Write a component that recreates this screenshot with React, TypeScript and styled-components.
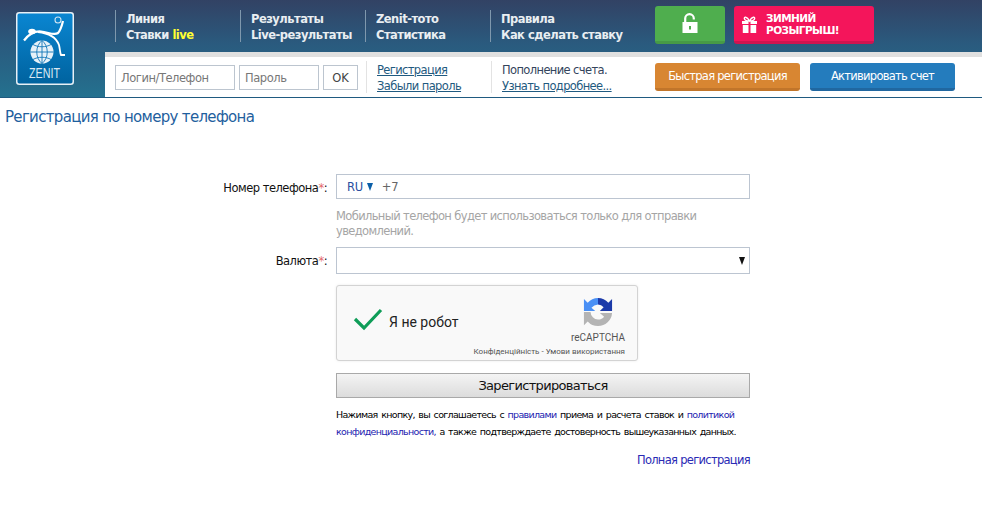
import React from "react";
import styled, { createGlobalStyle } from "styled-components";

const Global = createGlobalStyle`
  html, body { margin: 0; padding: 0; background: #fff; }
  body { font-family: "DejaVu Sans", Tahoma, sans-serif; font-size: 11.5px; color: #000; }
  a { color: inherit; }
`;

const Page = styled.div`
  width: 982px;
  height: 507px;
  overflow: hidden;
`;

const Header = styled.header`
  display: flex;
  height: 97px;
  border-bottom: 1px solid #1f5a80;
  background: linear-gradient(180deg, #324264 0%, #2a5a7e 45%, #24718f 100%);
`;

const LogoCol = styled.div`
  width: 105px;
  flex: none;
  padding: 12px 0 0 16px;
  box-sizing: border-box;
`;

const Main = styled.div`
  flex: 1;
  display: flex;
  flex-direction: column;
`;

const TopRow = styled.div`
  height: 52px;
  display: flex;
  align-items: flex-start;
  padding: 6px 0 0 10px;
  box-sizing: border-box;
`;

const NavCol = styled.div<{ $w: number }>`
  width: ${(p) => p.$w}px;
  flex: none;
  height: 32px;
  margin-top: 4px;
  padding: 1px 0 0 10px;
  border-left: 1px solid #7f98ad;
  box-sizing: border-box;
  color: #e9eef2;
  font-weight: 700;
  font-size: 11.5px;
  letter-spacing: -0.52px;
  line-height: 16px;
  white-space: nowrap;
`;

const Live = styled.span`
  color: #ffff33;
`;

const TopBtn = styled.div<{ $w: number; $bg: string; $edge: string; $ml: number }>`
  width: ${(p) => p.$w}px;
  height: 38px;
  margin-left: ${(p) => p.$ml}px;
  flex: none;
  box-sizing: border-box;
  background: ${(p) => p.$bg};
  border-bottom: 3px solid ${(p) => p.$edge};
  border-radius: 3px;
  display: flex;
  align-items: center;
`;

const LockBtn = styled(TopBtn)`
  justify-content: center;
`;

const PromoBtn = styled(TopBtn)`
  padding: 1px 0 0 7px;
  gap: 8px;
  color: #fff;
  font-weight: 700;
  font-size: 10.5px;
  line-height: 12px;
  letter-spacing: -0.55px;
`;

const LoginRow = styled.div`
  height: 45px;
  background: #fff;
  border-top: 5px solid #e0e0e0;
  box-sizing: border-box;
  display: flex;
  align-items: center;
  padding-left: 10px;
`;

const LoginInput = styled.div<{ $w: number }>`
  width: ${(p) => p.$w}px;
  height: 25px;
  margin-right: 4px;
  flex: none;
  box-sizing: border-box;
  border: 1px solid #bcc5cf;
  color: #777;
  padding-left: 5px;
  line-height: 25px;
  font-size: 11.5px;
  letter-spacing: -0.45px;
  white-space: nowrap;
`;

const OkBox = styled(LoginInput)`
  color: #444;
  padding: 0;
  text-align: center;
  margin-right: 8px;
  letter-spacing: 0;
`;

const LinkCol = styled.div<{ $w: number }>`
  width: ${(p) => p.$w}px;
  flex: none;
  height: 32px;
  padding: 1px 0 0 10px;
  border-left: 1px solid #e3e3e3;
  box-sizing: border-box;
  font-size: 11.5px;
  letter-spacing: -0.62px;
  line-height: 16px;
  color: #33445c;
  white-space: nowrap;
`;

const UnderLink = styled.a`
  display: block;
  color: #1f5a80;
  text-decoration: underline;
`;

const ActionBtn = styled.div<{ $bg: string; $edge: string; $ml: number }>`
  width: 145px;
  height: 28px;
  margin-left: ${(p) => p.$ml}px;
  flex: none;
  box-sizing: border-box;
  background: ${(p) => p.$bg};
  border-bottom: 3px solid ${(p) => p.$edge};
  border-radius: 3px;
  color: #fff;
  font-size: 11.5px;
  letter-spacing: -0.72px;
  line-height: 27px;
  text-align: center;
  white-space: nowrap;
`;

const Title = styled.h1`
  margin: 0;
  padding: 10px 0 0 5px;
  height: 76px;
  box-sizing: border-box;
  font-size: 15px;
  font-weight: 400;
  letter-spacing: -0.68px;
  line-height: 18px;
  color: #1f5f9e;
`;

const Form = styled.div`
  display: grid;
  grid-template-columns: 327px 414px;
  column-gap: 9px;
  align-items: start;
`;

const Label = styled.label`
  height: 25px;
  text-align: right;
  font-size: 11.5px;
  letter-spacing: -0.5px;
  line-height: 28px;
  white-space: nowrap;
  color: #111;
`;

const Star = styled.span`
  color: #e56a6a;
`;

const Field = styled.div<{ $h: number }>`
  height: ${(p) => p.$h}px;
  box-sizing: border-box;
  border: 1px solid #bcc5d1;
  display: flex;
  align-items: center;
  padding: 1px 0 0 10px;
  font-size: 11.5px;
  letter-spacing: -0.3px;
  color: #666;
`;

const Country = styled.span`
  color: #2a4fa0;
  margin-right: 9px;
  display: flex;
  align-items: center;
  gap: 4px;
`;

const Triangle = styled.i<{ $color: string }>`
  display: block;
  width: 0;
  height: 0;
  border-left: 3.5px solid transparent;
  border-right: 3.5px solid transparent;
  border-top: 8px solid ${(p) => p.$color};
`;

const Hint = styled.div`
  grid-column: 2;
  padding-top: 10px;
  height: 48px;
  box-sizing: border-box;
  font-size: 11.5px;
  letter-spacing: -0.63px;
  line-height: 15px;
  color: #a5a5a5;
`;

const SelectField = styled(Field)`
  justify-content: flex-end;
  padding-right: 4px;
`;

const Cell = styled.div`
  grid-column: 2;
`;

const Captcha = styled.div`
  position: relative;
  margin-top: 11px;
  width: 302px;
  height: 76px;
  box-sizing: border-box;
  border: 1px solid #d3d3d3;
  border-radius: 3px;
  background: #f9f9f9;
  box-shadow: 0 0 3px rgba(0, 0, 0, 0.08);
  display: flex;
  align-items: center;
  padding: 0 0 2px 16px;
  gap: 6px;
`;

const RobotText = styled.span`
  font-family: Roboto, sans-serif;
  font-size: 14px;
  color: #222;
`;

const CheckWrap = styled.div`
  margin-bottom: 7px;
  height: 24px;
`;

const CaptchaMark = styled.div`
  position: absolute;
  right: 12px;
  top: 11px;
  display: flex;
  flex-direction: column;
  align-items: flex-end;
`;

const CaptchaIcon = styled.div`
  margin-right: 12px;
  height: 30px;
`;

const CaptchaName = styled.div`
  margin-top: 5px;
  font-family: Roboto, sans-serif;
  font-size: 10px;
  line-height: 12px;
  color: #555;
`;

const CaptchaLegal = styled.div`
  position: absolute;
  right: 12px;
  bottom: 3px;
  font-family: Roboto, sans-serif;
  font-size: 8px;
  line-height: 10px;
  color: #555;
  white-space: nowrap;
`;

const Submit = styled.div`
  margin-top: 12px;
  height: 25px;
  box-sizing: border-box;
  border: 1px solid #a9a9a9;
  background: linear-gradient(180deg, #f4f4f4, #dcdcdc);
  text-align: center;
  font-size: 13px;
  letter-spacing: -0.67px;
  line-height: 24px;
  color: #111;
`;

const Terms = styled.div`
  margin-top: 8px;
  font-size: 9.5px;
  letter-spacing: -0.68px;
  word-spacing: 1.2px;
  line-height: 17px;
  color: #000;
  white-space: nowrap;
`;

const TermLink = styled.a`
  color: #2222b0;
  text-decoration: none;
`;

const FullLink = styled.a`
  display: block;
  margin-top: 12px;
  text-align: right;
  font-size: 11.5px;
  letter-spacing: -0.7px;
  line-height: 16px;
  color: #2a2ab4;
`;

const LogoSvg = styled.svg`
  display: block;
`;

const LogoWord = styled.text`
  font-family: "Liberation Sans", sans-serif;
  font-size: 14px;
  fill: #dbe9f3;
`;

const Logo = () => (
  <LogoSvg width="58" height="73" viewBox="0 0 58 73">
    <defs>
      <linearGradient id="lg" x1="0" y1="0" x2="0" y2="1">
        <stop offset="0" stopColor="#0a86d2" />
        <stop offset="1" stopColor="#00639f" />
      </linearGradient>
    </defs>
    <rect x="0.75" y="0.75" width="56.5" height="71.5" rx="2.5" fill="url(#lg)" stroke="#e8f0f6" strokeWidth="1.5" />
    <ellipse cx="16" cy="19.5" rx="3.8" ry="2.8" fill="#fff" />
    <path d="M8 28.5 C13 22 19 19 25 19.5 C32 20 38 24 42 21 C45 18 46 13 47 9" fill="none" stroke="#fff" strokeWidth="2.2" />
    <path d="M22 20 C32 21 40 25 43 33 C44 37 44 41 45 43 L49 43" fill="none" stroke="#fff" strokeWidth="1.8" />
    <circle cx="42" cy="8" r="3" fill="none" stroke="#cfe4f2" strokeWidth="1.1" />
    <circle cx="26" cy="40" r="11.5" fill="#e6f1f8" />
    <path d="M26 28.5 V51.5 M14.5 40 H37.5 M17 32.5 C22 35.5 30 35.5 35 32.5 M17 47.5 C22 44.5 30 44.5 35 47.5 M26 28.5 C19 34 19 46 26 51.5 M26 28.5 C33 34 33 46 26 51.5" fill="none" stroke="#1176b8" strokeWidth="0.9" />
    <LogoWord x="13" y="66" textLength="31" lengthAdjust="spacingAndGlyphs">ZENIT</LogoWord>
  </LogoSvg>
);

const LockIcon = () => (
  <svg width="16" height="21" viewBox="0 0 16 21">
    <path d="M3.2 9 V5.5 a4.3 4.3 0 0 1 8.6 0 V6.5" fill="none" stroke="#fff" strokeWidth="2.2" />
    <path fillRule="evenodd" d="M0.5 9 H15.5 V20 H0.5 Z M7 13 V16.5 H9 V13 Z" fill="#fff" />
  </svg>
);

const GiftIcon = () => (
  <svg width="17" height="17" viewBox="0 0 17 17">
    <path d="M1 5 H7.5 V8 H1 Z M9.5 5 H16 V8 H9.5 Z M1.8 9 H7.5 V17 H1.8 Z M9.5 9 H15.2 V17 H9.5 Z" fill="#fff" />
    <path d="M8.5 5 C6 0 2.5 0.5 3.5 3 C4 4.5 7 5 8.5 5 C10 5 13 4.5 13.5 3 C14.5 0.5 11 0 8.5 5 Z" fill="none" stroke="#fff" strokeWidth="1.4" />
  </svg>
);

const RecaptchaIcon = () => (
  <svg width="30" height="30" viewBox="0 0 32 32">
    <path d="M16 1 A15 15 0 0 1 27 6 L31 2 V15 H18 L22 11 A9 9 0 0 0 16 8 Z" fill="#1c3aa9" />
    <path d="M16 1 A15 15 0 0 0 5 6 L1 2 V15 H13 L9 11.5 A9.5 9.5 0 0 1 16 8 Z" fill="#4a90f5" />
    <path d="M1 16 H8 A8.5 8.5 0 0 0 16 24 C19 24 21 23 22.5 21 L18 17 H31 A15 15 0 0 1 16 31 A15 15 0 0 1 5 26 L1 30 Z" fill="#b4b4b4" />
  </svg>
);

const navItems = [
  { w: 125, a: "Линия", b: <>Ставки <Live>live</Live></> },
  { w: 125, a: "Результаты", b: "Live-результаты" },
  { w: 125, a: "Zenit-тото", b: "Статистика" },
  { w: 165, a: "Правила", b: "Как сделать ставку" },
];

export default function App() {
  return (
    <Page>
      <Global />
      <Header>
        <LogoCol>
          <Logo />
        </LogoCol>
        <Main>
          <TopRow>
            {navItems.map((n) => (
              <NavCol key={n.a} $w={n.w}>
                {n.a}
                <br />
                {n.b}
              </NavCol>
            ))}
            <LockBtn $w={70} $ml={0} $bg="#4fae4e" $edge="#479a46"><LockIcon /></LockBtn>
            <PromoBtn $w={140} $ml={9} $bg="#f4155b" $edge="#cf1450">
              <GiftIcon />
              <span>ЗИМНИЙ<br />РОЗЫГРЫШ!</span>
            </PromoBtn>
          </TopRow>
          <LoginRow>
            <LoginInput $w={120}>Логин/Телефон</LoginInput>
            <LoginInput $w={80}>Пароль</LoginInput>
            <OkBox $w={35}>OK</OkBox>
            <LinkCol $w={125}>
              <UnderLink>Регистрация</UnderLink>
              <UnderLink>Забыли пароль</UnderLink>
            </LinkCol>
            <LinkCol $w={164}>
              Пополнение счета.
              <UnderLink>Узнать подробнее...</UnderLink>
            </LinkCol>
            <ActionBtn $ml={0} $bg="#d88632" $edge="#c1752a">Быстрая регистрация</ActionBtn>
            <ActionBtn $ml={10} $bg="#247cbd" $edge="#2067a0">Активировать счет</ActionBtn>
          </LoginRow>
        </Main>
      </Header>
      <Title>Регистрация по номеру телефона</Title>
      <Form>
        <Label>Номер телефона<Star>*</Star>:</Label>
        <Field $h={25}>
          <Country>RU <Triangle $color="#0b5fa8" /></Country>+7
        </Field>
        <Hint>Мобильный телефон будет использоваться только для отправки уведомлений.</Hint>
        <Label>Валюта<Star>*</Star>:</Label>
        <SelectField $h={27}><Triangle $color="#111" /></SelectField>
        <Cell>
          <Captcha>
            <CheckWrap>
              <svg width="30" height="24" viewBox="0 0 30 24">
                <path d="M2 12 L11 21 L28 3" fill="none" stroke="#0f9d58" strokeWidth="3.2" />
              </svg>
            </CheckWrap>
            <RobotText>Я не робот</RobotText>
            <CaptchaMark>
              <CaptchaIcon><RecaptchaIcon /></CaptchaIcon>
              <CaptchaName>reCAPTCHA</CaptchaName>
            </CaptchaMark>
            <CaptchaLegal>Конфіденційність - Умови використання</CaptchaLegal>
          </Captcha>
          <Submit>Зарегистрироваться</Submit>
          <Terms>
            Нажимая кнопку, вы соглашаетесь с <TermLink>правилами</TermLink> приема и расчета ставок и <TermLink>политикой</TermLink>
            <br />
            <TermLink>конфиденциальности,</TermLink> а также подтверждаете достоверность вышеуказанных данных.
          </Terms>
          <FullLink>Полная регистрация</FullLink>
        </Cell>
      </Form>
    </Page>
  );
}
